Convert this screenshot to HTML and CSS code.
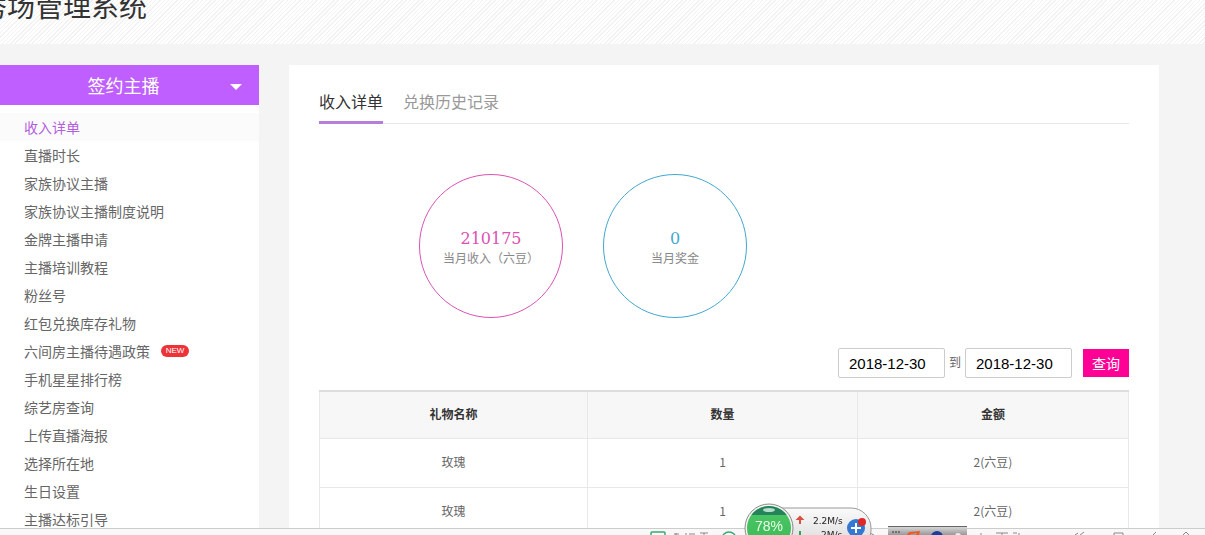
FILE: index.html
```html
<!DOCTYPE html>
<html lang="zh-CN">
<head>
<meta charset="utf-8">
<title>秀场管理系统</title>
<link rel="stylesheet" href="styles.css">
</head>
<body>
<header class="top"><h1 class="brand">秀场管理系统</h1></header>
<div class="layout">
  <aside class="side">
    <button class="side-head" type="button"><span class="side-title">签约主播</span><svg class="caret" viewBox="0 0 12 6" aria-hidden="true"><path d="M0 0h12L6 6z"/></svg></button>
    <nav class="menu">
      <a class="item active" href="#">收入详单</a>
      <a class="item" href="#">直播时长</a>
      <a class="item" href="#">家族协议主播</a>
      <a class="item" href="#">家族协议主播制度说明</a>
      <a class="item" href="#">金牌主播申请</a>
      <a class="item" href="#">主播培训教程</a>
      <a class="item" href="#">粉丝号</a>
      <a class="item" href="#">红包兑换库存礼物</a>
      <a class="item" href="#">六间房主播待遇政策<span class="new">NEW</span></a>
      <a class="item" href="#">手机星星排行榜</a>
      <a class="item" href="#">综艺房查询</a>
      <a class="item" href="#">上传直播海报</a>
      <a class="item" href="#">选择所在地</a>
      <a class="item" href="#">生日设置</a>
      <a class="item" href="#">主播达标引导</a>
    </nav>
  </aside>
  <main class="panel">
    <nav class="tabs">
      <a class="tab current" href="#">收入详单</a>
      <a class="tab" href="#">兑换历史记录</a>
    </nav>
    <section class="stats">
      <div class="stat pink"><strong class="num">210175</strong><span class="cap">当月收入（六豆）</span></div>
      <div class="stat blue"><strong class="num">0</strong><span class="cap">当月奖金</span></div>
    </section>
    <form class="filter">
      <input class="date" type="text" value="2018-12-30" aria-label="开始日期">
      <label class="to" for="end">到</label>
      <input class="date" id="end" type="text" value="2018-12-30">
      <button class="query" type="button">查询</button>
    </form>
    <table class="list">
      <thead><tr><th class="gift">礼物名称</th><th class="count">数量</th><th>金额</th></tr></thead>
      <tbody>
        <tr><td>玫瑰</td><td>1</td><td>2(六豆)</td></tr>
        <tr><td>玫瑰</td><td>1</td><td>2(六豆)</td></tr>
      </tbody>
    </table>
  </main>
</div>
<footer class="status">
  <svg class="tray" viewBox="0 0 565 7" aria-hidden="true">
    <path d="M0 0" />
    <g fill="none" stroke="#2fae74" stroke-width="1.5"><rect x="11" y="4" width="14" height="12" rx="1"/><circle cx="89" cy="11" r="7"/></g>
    <g fill="none" stroke="#888"><path d="M36 5v2M34 6h5M46 5v2M49 6h6M60 5h8M64 5v2M230 5l4 2M341 5v2M356 5h12M362 5v2M373 5h4M379 5v2M435 7l3-2M440 7l4-3M474 7v-2h9v2M513 7l3-3M543 7l3-3 3 3"/></g>
  </svg>
</footer>
<svg class="thumb" viewBox="0 0 79 9" aria-hidden="true">
  <defs><linearGradient id="t" x1="0" x2="0" y1="0" y2="1"><stop stop-color="#ddd"/><stop offset="1" stop-color="#999"/></linearGradient></defs>
  <path d="M0 0h79v9H0z" fill="url(#t)"/><path d="M0 0h79v1H0z" fill="#666"/>
  <path d="M4 6h2m1 0h2m1 0h2" stroke="#333"/><path d="M19 9l2-3 11-1-1 4h-3l1-2-6 1-1 1z" fill="#ee5a22"/><circle cx="49" cy="11" r="6" fill="#1c3d9c"/><circle cx="70" cy="10" r="3" fill="#eee"/>
</svg>
<svg class="monitor" viewBox="0 0 130 35" role="img" aria-label="78%">
  <defs>
    <linearGradient id="g" x1="0" x2="0" y1="0" y2="1"><stop stop-color="#4fc76a"/><stop offset="1" stop-color="#35b84d"/></linearGradient>
    <linearGradient id="c" x1="0" x2="0" y1="0" y2="1"><stop stop-color="#fafafa"/><stop offset="1" stop-color="#d8d8d8"/></linearGradient>
    <clipPath id="disc"><circle cx="27" cy="28" r="22"/></clipPath>
  </defs>
  <rect x="20" y="8" width="109" height="42" rx="20" fill="url(#c)" stroke="#999"/>
  <circle cx="27" cy="28" r="24" fill="#f5f5f5" stroke="#888"/>
  <g clip-path="url(#disc)"><path d="M0 0h60v60H0z" fill="url(#g)"/><path d="M0 0h60v15H0z" fill="#26825a"/><ellipse cx="27" cy="10" rx="6" ry="2" fill="#b7ddd0"/></g>
  <text x="27" y="31" text-anchor="middle" class="pct">78%</text>
  <path d="M58 24v-6M56 19l2-2 2 2z" stroke="#d85040" stroke-width="2" fill="#d85040"/>
  <path d="M58 31v6" stroke="#2ba65a" stroke-width="2"/>
  <text x="71" y="24" class="rate">2.2M/s</text><text x="79" y="38" class="rate">2M/s</text>
  <circle cx="114" cy="28" r="9" fill="#3478d2"/><path d="M109 28h10M114 23v10" stroke="#fff" stroke-width="2"/>
  <circle cx="120" cy="22" r="4" fill="#df2929"/>
</svg>
</body>
</html>
```
FILE: styles.css
```css
* { box-sizing: border-box; }
body {
  margin: 0;
  height: 100vh;
  overflow: hidden;
  background: #f4f4f4;
  color: #666;
  font-family: "Liberation Sans", "Noto Sans CJK SC", sans-serif;
  font-size: 12px;
}
a { color: inherit; text-decoration: none; }
.top {
  display: flex;
  align-items: flex-end;
  height: 44px;
  padding-bottom: 20px;
  overflow: hidden;
  background: repeating-linear-gradient(135deg, #fff 0 2px, #f2f2f2 2px 3px);
}
.brand {
  margin: 0 0 0 -21px;
  color: #333;
  font-size: 28px;
  font-weight: 400;
  line-height: 32px;
}
.layout {
  display: grid;
  grid-template-columns: 259px 1fr;
  gap: 30px;
  min-height: calc(100vh - 44px);
  padding: 21px 46px 0 0;
}
.side, .panel { background: #fff; }
.side-head {
  display: flex;
  align-items: center;
  width: 100%;
  height: 40px;
  padding: 0 17px 0 0;
  border: 0;
  background: #bf5fff;
  color: #fff;
  font: inherit;
  font-size: 18px;
}
.side-title { flex: 1; padding-left: 17px; }
.caret { width: 12px; height: 6px; margin-top: 4px; fill: #fff; }
.menu { padding-top: 8px; }
.item {
  display: flex;
  align-items: center;
  gap: 11px;
  height: 28px;
  padding-left: 24px;
  font-size: 14px;
}
.active { background: #fbfbfb; color: #b35fdd; }
.new {
  width: 28px;
  border-radius: 6px;
  background: #ee3338;
  color: #fff;
  font-size: 8px;
  line-height: 12px;
  text-align: center;
}
.panel { padding: 20px 30px 0; }
.tabs { display: flex; gap: 20px; border-bottom: 1px solid #e8e8e8; }
.tab {
  height: 39px;
  margin-bottom: -1px;
  color: #999;
  font-size: 16px;
  line-height: 36px;
}
.current { border-bottom: 3px solid #b57edc; color: #333; }
.stats { display: flex; gap: 40px; padding: 50px 100px 30px; }
.stat {
  display: flex;
  flex-direction: column;
  align-items: center;
  justify-content: center;
  width: 144px;
  height: 144px;
  padding-top: 6px;
  border: 1px solid;
  border-radius: 50%;
}
.pink { color: #dc52b4; }
.blue { color: #42a8d0; }
.num { font: 400 16px/20px "DejaVu Serif", serif; }
.cap { color: #888; line-height: 20px; white-space: nowrap; }
.filter { display: flex; align-items: center; justify-content: flex-end; gap: 4px; }
.to { padding-bottom: 4px; }
.date {
  width: 107px;
  height: 30px;
  padding: 0 10px;
  border: 1px solid #ccc;
  border-radius: 2px;
  background: #fff;
  color: #000;
  font: 15px "Liberation Sans", sans-serif;
}
.query {
  width: 46px;
  height: 28px;
  margin-left: 7px;
  padding: 0;
  border: 0;
  background: #ff0097;
  color: #fff;
  font: inherit;
  font-size: 14px;
}
.list {
  width: 100%;
  margin-top: 12px;
  border-collapse: collapse;
  table-layout: fixed;
  text-align: center;
}
.list th, .list td { height: 49px; padding: 0 0 2px; border: 1px solid #e8e8e8; }
.list th { height: 47px; border-top: 2px solid #ddd; background: #f7f7f7; color: #333; font-weight: 700; }
.list .gift { width: 268px; }
.list .count { width: 270px; }
.list td { font-family: "Noto Sans CJK SC", sans-serif; }
.status {
  position: fixed;
  right: 0;
  bottom: 0;
  left: 0;
  height: 7px;
  border-top: 1px solid #ccc;
  background: #f8f8f8;
}
.tray { position: absolute; right: 0; bottom: 0; width: 565px; height: 7px; }
.thumb { position: fixed; right: 238px; bottom: 0; width: 79px; height: 9px; }
.monitor { position: fixed; right: 333px; bottom: 0; width: 130px; height: 35px; }
.pct { fill: #e9ffe9; font-size: 14px; }
.rate { fill: #222; font-family: "DejaVu Sans", sans-serif; font-size: 9px; }
```
